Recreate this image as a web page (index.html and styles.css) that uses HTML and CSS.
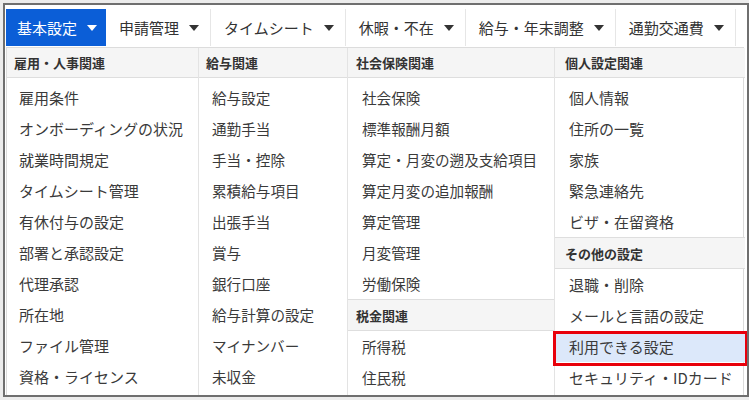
FILE: index.html
```html
<!DOCTYPE html>
<html lang="ja">
<head>
<meta charset="utf-8">
<link rel="stylesheet" href="styles.css">
</head>
<body>
<div class="frame">
  <nav class="nav">
    <div class="tab active"><span>基本設定</span><i class="caret"></i></div>
    <div class="tab"><span>申請管理</span><i class="caret"></i></div>
    <div class="tab"><span>タイムシート</span><i class="caret"></i></div>
    <div class="tab"><span>休暇・不在</span><i class="caret"></i></div>
    <div class="tab"><span>給与・年末調整</span><i class="caret"></i></div>
    <div class="tab"><span>通勤交通費</span><i class="caret"></i></div>
  </nav>
  <div class="panel">
    <div class="col c1">
      <div class="head">雇用・人事関連</div>
      <ul class="list">
        <li>雇用条件</li>
        <li>オンボーディングの状況</li>
        <li>就業時間規定</li>
        <li>タイムシート管理</li>
        <li>有休付与の設定</li>
        <li>部署と承認設定</li>
        <li>代理承認</li>
        <li>所在地</li>
        <li>ファイル管理</li>
        <li>資格・ライセンス</li>
      </ul>
    </div>
    <div class="col c2">
      <div class="head">給与関連</div>
      <ul class="list">
        <li>給与設定</li>
        <li>通勤手当</li>
        <li>手当・控除</li>
        <li>累積給与項目</li>
        <li>出張手当</li>
        <li>賞与</li>
        <li>銀行口座</li>
        <li>給与計算の設定</li>
        <li>マイナンバー</li>
        <li>未収金</li>
      </ul>
    </div>
    <div class="col c3">
      <div class="head">社会保険関連</div>
      <ul class="list">
        <li>社会保険</li>
        <li>標準報酬月額</li>
        <li>算定・月変の遡及支給項目</li>
        <li>算定月変の追加報酬</li>
        <li>算定管理</li>
        <li>月変管理</li>
        <li>労働保険</li>
      </ul>
      <div class="head mid">税金関連</div>
      <ul class="list tight">
        <li>所得税</li>
        <li>住民税</li>
      </ul>
    </div>
    <div class="col c4">
      <div class="head">個人設定関連</div>
      <ul class="list">
        <li>個人情報</li>
        <li>住所の一覧</li>
        <li>家族</li>
        <li>緊急連絡先</li>
        <li>ビザ・在留資格</li>
      </ul>
      <div class="head mid">その他の設定</div>
      <ul class="list tight">
        <li>退職・削除</li>
        <li>メールと言語の設定</li>
        <li class="hl">利用できる設定</li>
        <li>セキュリティ・IDカード</li>
      </ul>
    </div>
  </div>
</div>
</body>
</html>
```
FILE: styles.css
```css
html, body {
  margin: 0;
  padding: 0;
}
body {
  background: #ececec;
  width: 749px;
  height: 400px;
  overflow: hidden;
  font-family: "Noto Sans CJK JP", "Noto Sans", "Liberation Sans", sans-serif;
  color: #333;
}
.frame {
  box-sizing: border-box;
  margin: 3px 0 0 3px;
  width: 746px;
  height: 394px;
  border: 2px solid #6f6f6f;
  background: #fff;
  padding: 4px 3px 0 1px;
  overflow: hidden;
}
.nav {
  display: flex;
  height: 37px;
}
.tab {
  display: flex;
  align-items: center;
  gap: 10px;
  padding: 0 11px 0 13px;
  font-size: 15px;
  line-height: 1;
  color: #333;
  border-right: 1px solid #e6e6e6;
  white-space: nowrap;
}
.tab.active {
  background: #0b5ed7;
  color: #fff;
  border-right: none;
  padding-left: 11px;
  padding-right: 9px;
}
.caret {
  width: 0;
  height: 0;
  border-left: 5px solid transparent;
  border-right: 5px solid transparent;
  border-top: 6px solid #333;
  margin-top: 1px;
}
.tab.active .caret {
  border-top-color: #fff;
}
.panel {
  margin-top: 1px;
  display: grid;
  grid-template-columns: 192px 149px 207px 190px;
  border: 1px solid #dcdcdc;
  height: 360px;
  box-sizing: border-box;
}
.col {
  border-right: 1px solid #e3e3e3;
}
.col:last-child {
  border-right: none;
}
.head {
  box-sizing: border-box;
  height: 30px;
  display: flex;
  align-items: center;
  background: #f5f5f5;
  border-bottom: 1px solid #dedede;
  font-size: 13px;
  font-weight: bold;
  color: #333;
  padding-left: 7px;
}
.head.mid {
  height: 32px;
  border-top: 1px solid #dedede;
}
.c3 .head { padding-left: 8px; }
.c4 .head { padding-left: 10px; }
.list {
  list-style: none;
  margin: 0;
  padding: 4px 0 0 0;
}
.list.tight {
  padding-top: 0;
}
.list li {
  height: 31px;
  display: flex;
  align-items: center;
  font-size: 14.6px;
  color: #3a3a3a;
  white-space: nowrap;
}
.c1 .list li { padding-left: 12px; font-size: 15px; }
.c2 .list li { padding-left: 13px; }
.c3 .list li { padding-left: 14px; }
.c4 .list li { padding-left: 14px; font-size: 15px; }
.list li.hl {
  position: relative;
  background: #dce8fa;
}
.list li.hl::after {
  content: "";
  position: absolute;
  left: -2px;
  right: -3px;
  top: 0;
  bottom: -4px;
  border: 3px solid #e8000b;
}
```
